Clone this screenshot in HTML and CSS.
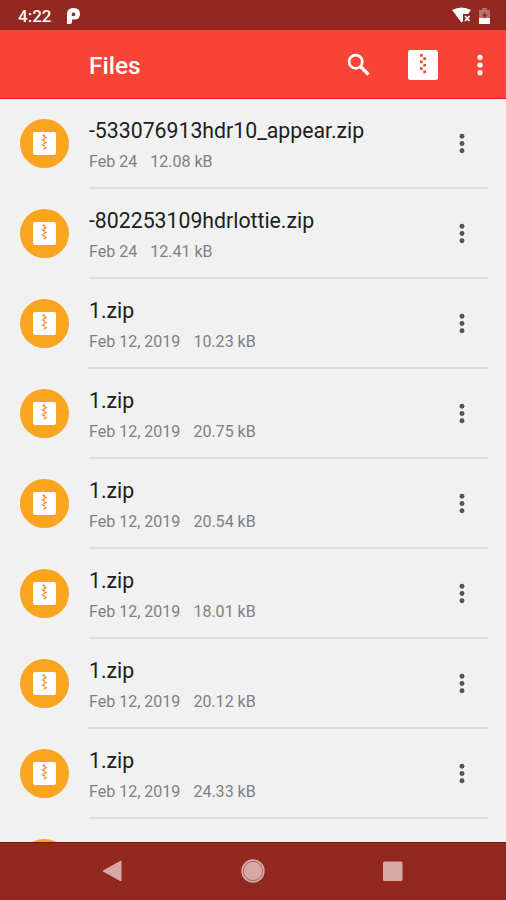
FILE: index.html
```
<!DOCTYPE html>
<html lang="en">
<head>
<meta charset="utf-8">
<title>Files</title>
<link rel="stylesheet" href="styles.css">
</head>
<body>
<svg class="defs" width="0" height="0">
  <symbol id="zip" viewBox="0 0 30 30">
    <rect width="30" height="30" rx="2.5" fill="#fff"/>
    <path d="M12 4h2.700v2.700H12zM15.300 7.300H18V10h-2.700zM12 10.600h2.700v2.700H12zM15.300 13.900H18v2.700h-2.700zM12 17.200h2.700v2.700H12zM15.300 20.500H18v2.700h-2.700z" fill="currentColor"/>
  </symbol>
  <symbol id="zip-small" viewBox="0 0 23 23">
    <rect width="23" height="23" rx="2" fill="#fff"/>
    <path d="M9.600 2.800l3.400 2.500-3.400 2.500 3.400 2.500-3.400 2.500 3.400 2.500-3.200 2.800" fill="none" stroke="currentColor" stroke-width="1.700" stroke-dasharray="2.800 1.400"/>
  </symbol>
  <symbol id="dots" viewBox="0 0 6 22">
    <circle cx="3" cy="3.3" r="2.6"/><circle cx="3" cy="11" r="2.6"/><circle cx="3" cy="18.7" r="2.6"/>
  </symbol>
</svg>
<div class="screen">
  <div class="status">
    <span class="time">4:22</span>
    <svg class="p-logo" width="13" height="16" viewBox="0 0 13 16"><path d="M0 6.200Q0 0 6.500 0T13 6Q13 11.600 7.200 11.600H5V14a2 2 0 0 1-2 2H0z" fill="#fff"/><path d="M4.800 8V6.300a1.800 1.800 0 1 1 1.800 1.700H4.800" fill="#922820"/></svg>
    <svg class="wifi" width="20" height="17" viewBox="0 0 20 17"><path d="M0 3Q9.500-2 19 3L16 7H11v7.500L9.500 15.500z" fill="#fff"/><path d="M13 9l4.500 5m0-5L13 14" stroke="#fff" stroke-width="1.700"/></svg>
    <svg class="battery" width="11" height="17" viewBox="0 0 11 17"><path d="M3.200 0h4.600v2H11v8H0V2h3.200z" fill="#b9726a"/><path d="M0 10h11v5.500q0 .5-.5.500H.500q-.5 0-.5-.5z" fill="#fff"/><path d="M6.200 3.500L3 8.500h2.300V11l3-4.500H6.200z" fill="#922820"/></svg>
  </div>
  <header class="appbar">
    <h1>Files</h1>
    <svg class="search" width="24" height="24" viewBox="0 0 24 24"><circle cx="8.700" cy="8.700" r="6.600" fill="none" stroke="#fff" stroke-width="2.700"/><path d="M13.500 13.500l8 8" stroke="#fff" stroke-width="3.200"/></svg>
    <svg class="zip-action" width="30" height="30"><use href="#zip"/></svg>
    <svg class="more" width="6" height="22"><use href="#dots"/></svg>
  </header>
  <main class="list">
    <div class="row"><span class="avatar"><svg width="23" height="23"><use href="#zip-small"/></svg></span><div class="body"><div class="text"><p class="name">-533076913hdr10_appear.zip</p><p class="meta"><span>Feb 24</span><span>12.08 kB</span></p></div><svg class="dots" width="6" height="21"><use href="#dots"/></svg></div></div>
    <div class="row"><span class="avatar"><svg width="23" height="23"><use href="#zip-small"/></svg></span><div class="body"><div class="text"><p class="name">-802253109hdrlottie.zip</p><p class="meta"><span>Feb 24</span><span>12.41 kB</span></p></div><svg class="dots" width="6" height="21"><use href="#dots"/></svg></div></div>
    <div class="row"><span class="avatar"><svg width="23" height="23"><use href="#zip-small"/></svg></span><div class="body"><div class="text"><p class="name">1.zip</p><p class="meta"><span>Feb 12, 2019</span><span>10.23 kB</span></p></div><svg class="dots" width="6" height="21"><use href="#dots"/></svg></div></div>
    <div class="row"><span class="avatar"><svg width="23" height="23"><use href="#zip-small"/></svg></span><div class="body"><div class="text"><p class="name">1.zip</p><p class="meta"><span>Feb 12, 2019</span><span>20.75 kB</span></p></div><svg class="dots" width="6" height="21"><use href="#dots"/></svg></div></div>
    <div class="row"><span class="avatar"><svg width="23" height="23"><use href="#zip-small"/></svg></span><div class="body"><div class="text"><p class="name">1.zip</p><p class="meta"><span>Feb 12, 2019</span><span>20.54 kB</span></p></div><svg class="dots" width="6" height="21"><use href="#dots"/></svg></div></div>
    <div class="row"><span class="avatar"><svg width="23" height="23"><use href="#zip-small"/></svg></span><div class="body"><div class="text"><p class="name">1.zip</p><p class="meta"><span>Feb 12, 2019</span><span>18.01 kB</span></p></div><svg class="dots" width="6" height="21"><use href="#dots"/></svg></div></div>
    <div class="row"><span class="avatar"><svg width="23" height="23"><use href="#zip-small"/></svg></span><div class="body"><div class="text"><p class="name">1.zip</p><p class="meta"><span>Feb 12, 2019</span><span>20.12 kB</span></p></div><svg class="dots" width="6" height="21"><use href="#dots"/></svg></div></div>
    <div class="row"><span class="avatar"><svg width="23" height="23"><use href="#zip-small"/></svg></span><div class="body"><div class="text"><p class="name">1.zip</p><p class="meta"><span>Feb 12, 2019</span><span>24.33 kB</span></p></div><svg class="dots" width="6" height="21"><use href="#dots"/></svg></div></div>
    <div class="row"><span class="avatar"></span></div>
  </main>
  <nav class="navbar">
    <svg width="24" height="24" viewBox="0 0 24 24"><path d="M2 12L20 2v20z" fill="#d7a9a6" stroke="#d7a9a6" stroke-linejoin="round"/></svg>
    <svg width="24" height="24" viewBox="0 0 24 24"><circle cx="12" cy="12" r="11.700" fill="#d7a9a6"/><circle cx="12" cy="12" r="9.600" fill="none" stroke="#a75a55" stroke-width=".9"/></svg>
    <svg width="24" height="24" viewBox="0 0 24 24"><rect x="2" y="2.500" width="19.500" height="19.500" rx="1.500" fill="#d7a9a6"/></svg>
  </nav>
</div>
</body>
</html>
```
FILE: styles.css
```
* { box-sizing: border-box; }
body { margin: 0; font-family: Roboto, sans-serif; background: #f1f1f1; }
h1, p { margin: 0; }
svg { flex: none; display: block; }
.defs { position: absolute; }
.screen { width: 506px; height: 900px; display: flex; flex-direction: column; overflow: hidden; }
.status { height: 30px; flex: none; background: #922820; display: flex; align-items: center; padding: 0 16px 0 18px; color: #fff; }
.time { width: 49px; font-size: 17px; font-weight: 500; line-height: 20px; padding-top: 1px; }
.p-logo { margin-top: 1px; }
.wifi { margin-left: auto; margin-right: 7px; }
.battery { margin-top: 2px; }
.appbar { height: 69px; flex: none; background: #f84437; border-bottom: 1px solid #dd2119; display: flex; align-items: center; padding: 1px 23px 0 89px; color: #fff; }
h1 { flex: 1; font-size: 24.5px; font-weight: 500; line-height: 30px; padding-top: 3px; }
.search { margin-right: 37px; }
.zip-action { color: #e94b35; margin-right: 39px; }
.more { fill: #fff; }
.list { flex: 1; min-height: 0; overflow: hidden; background: #f1f1f1; }
.row { height: 90px; display: flex; align-items: flex-start; padding: 0 18px 0 20px; }
.avatar { width: 49px; height: 49px; margin: 20px 20px 0 0; border-radius: 50%; background: #f9a520; color: #f0913a; display: flex; align-items: center; justify-content: center; flex: none; }
.body { flex: 1; height: 90px; border-bottom: 2px solid #dedede; display: flex; align-items: flex-start; justify-content: space-between; }
.text { padding-top: 18px; white-space: nowrap; }
.name { font-size: 21.25px; line-height: 28px; color: #202020; }
.meta { display: flex; gap: 13px; margin-top: 6px; font-size: 16.05px; line-height: 22px; color: #808080; }
.dots { fill: #555; margin: 34px 23px 0 0; }
.navbar { height: 58px; flex: none; background: #922820; border-top: 1px solid #7d0f0c; display: flex; align-items: center; justify-content: center; gap: 116px; padding-bottom: 2px; }
```
